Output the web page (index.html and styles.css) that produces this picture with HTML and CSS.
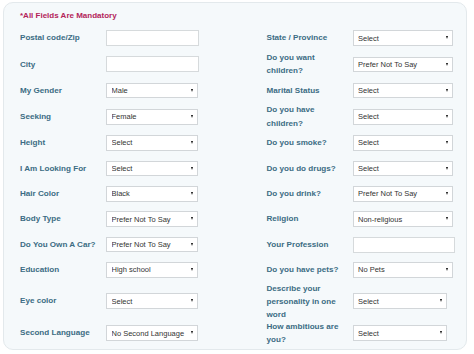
FILE: index.html
```html
<!DOCTYPE html>
<html lang="en">
<head>
<meta charset="utf-8">
<title>Profile details</title>
<link rel="stylesheet" href="styles.css">
</head>
<body>
<form class="panel">
  <p class="note">*All Fields Are Mandatory</p>
  <div class="grid">
    <label class="lbl">Postal code/Zip</label>
    <div class="cell"><input class="txt" type="text"></div>
    <label class="lbl">State / Province</label>
    <div class="cell"><span class="sel wide"><select><option>Select</option></select></span></div>

    <label class="lbl">City</label>
    <div class="cell"><input class="txt" type="text"></div>
    <label class="lbl">Do you want children?</label>
    <div class="cell"><span class="sel wide"><select><option>Prefer Not To Say</option></select></span></div>

    <label class="lbl">My Gender</label>
    <div class="cell"><span class="sel"><select><option>Male</option></select></span></div>
    <label class="lbl">Marital Status</label>
    <div class="cell"><span class="sel wide"><select><option>Select</option></select></span></div>

    <label class="lbl">Seeking</label>
    <div class="cell"><span class="sel"><select><option>Female</option></select></span></div>
    <label class="lbl">Do you have children?</label>
    <div class="cell"><span class="sel wide"><select><option>Select</option></select></span></div>

    <label class="lbl">Height</label>
    <div class="cell"><span class="sel"><select><option>Select</option></select></span></div>
    <label class="lbl">Do you smoke?</label>
    <div class="cell"><span class="sel wide"><select><option>Select</option></select></span></div>

    <label class="lbl">I Am Looking For</label>
    <div class="cell"><span class="sel"><select><option>Select</option></select></span></div>
    <label class="lbl">Do you do drugs?</label>
    <div class="cell"><span class="sel wide"><select><option>Select</option></select></span></div>

    <label class="lbl">Hair Color</label>
    <div class="cell"><span class="sel"><select><option>Black</option></select></span></div>
    <label class="lbl">Do you drink?</label>
    <div class="cell"><span class="sel wide"><select><option>Prefer Not To Say</option></select></span></div>

    <label class="lbl">Body Type</label>
    <div class="cell"><span class="sel"><select><option>Prefer Not To Say</option></select></span></div>
    <label class="lbl">Religion</label>
    <div class="cell"><span class="sel wide"><select><option>Non-religious</option></select></span></div>

    <label class="lbl">Do You Own A Car?</label>
    <div class="cell"><span class="sel"><select><option>Prefer Not To Say</option></select></span></div>
    <label class="lbl">Your Profession</label>
    <div class="cell"><input class="txt wide" type="text"></div>

    <label class="lbl">Education</label>
    <div class="cell"><span class="sel"><select><option>High school</option></select></span></div>
    <label class="lbl">Do you have pets?</label>
    <div class="cell"><span class="sel wide"><select><option>No Pets</option></select></span></div>

    <label class="lbl">Eye color</label>
    <div class="cell"><span class="sel"><select><option>Select</option></select></span></div>
    <label class="lbl tight">Describe your personality in one word</label>
    <div class="cell"><span class="sel mid"><select><option>Select</option></select></span></div>

    <label class="lbl">Second Language</label>
    <div class="cell"><span class="sel"><select><option>No Second Language</option></select></span></div>
    <label class="lbl">How ambitious are you?</label>
    <div class="cell"><span class="sel mid"><select><option>Select</option></select></span></div>
  </div>
</form>
</body>
</html>
```

FILE: styles.css
```css
* { box-sizing: border-box; }

html, body {
  margin: 0;
  padding: 0;
  background: #ffffff;
}

body {
  font-family: "Liberation Sans", Arial, sans-serif;
}

.panel {
  width: 464px;
  margin: 2px 0 0 3px;
  padding: 8px 11px 2px 16px;
  background: #f5f9fb;
  border: 1px solid #e3e9ec;
  border-radius: 10px;
}

.note {
  margin: 0 0 4.5px 0;
  font-size: 8px;
  line-height: 10px;
  font-weight: bold;
  color: #b3245a;
}

.grid {
  display: grid;
  grid-template-columns: 86px 160.5px 86px 102.5px;
  grid-auto-rows: minmax(25.4px, auto);
  align-items: center;
}

.lbl {
  display: block;
  width: 80px;
  font-size: 8.1px;
  line-height: 13.5px;
  font-weight: bold;
  color: #3b6c83;
}

.lbl.tight {
  line-height: 13px;
  margin: -1px 0;
}

.cell {
  display: flex;
  align-items: center;
}

.txt {
  width: 93px;
  height: 16px;
  margin: 0;
  padding: 0 4px;
  border: 1px solid #d6dadc;
  background: #ffffff;
  border-radius: 0;
  outline: none;
}

.txt.wide { width: 102px; }

.sel {
  position: relative;
  display: block;
  width: 92px;
  height: 15.5px;
}

.sel.wide { width: 100px; }
.sel.mid { width: 94px; }

.sel select {
  -webkit-appearance: none;
  appearance: none;
  display: block;
  width: 100%;
  height: 100%;
  margin: 0;
  padding: 0 10px 0 4.5px;
  border: 1px solid #d2d6d9;
  border-radius: 0;
  background: #ffffff;
  font-family: "Liberation Sans", Arial, sans-serif;
  font-size: 7.5px;
  line-height: 13px;
  color: #333333;
  outline: none;
}

.sel::after {
  content: "";
  position: absolute;
  right: 5px;
  top: 6px;
  width: 0;
  height: 0;
  border-left: 1.8px solid transparent;
  border-right: 1.8px solid transparent;
  border-top: 3px solid #111111;
  pointer-events: none;
}
```
